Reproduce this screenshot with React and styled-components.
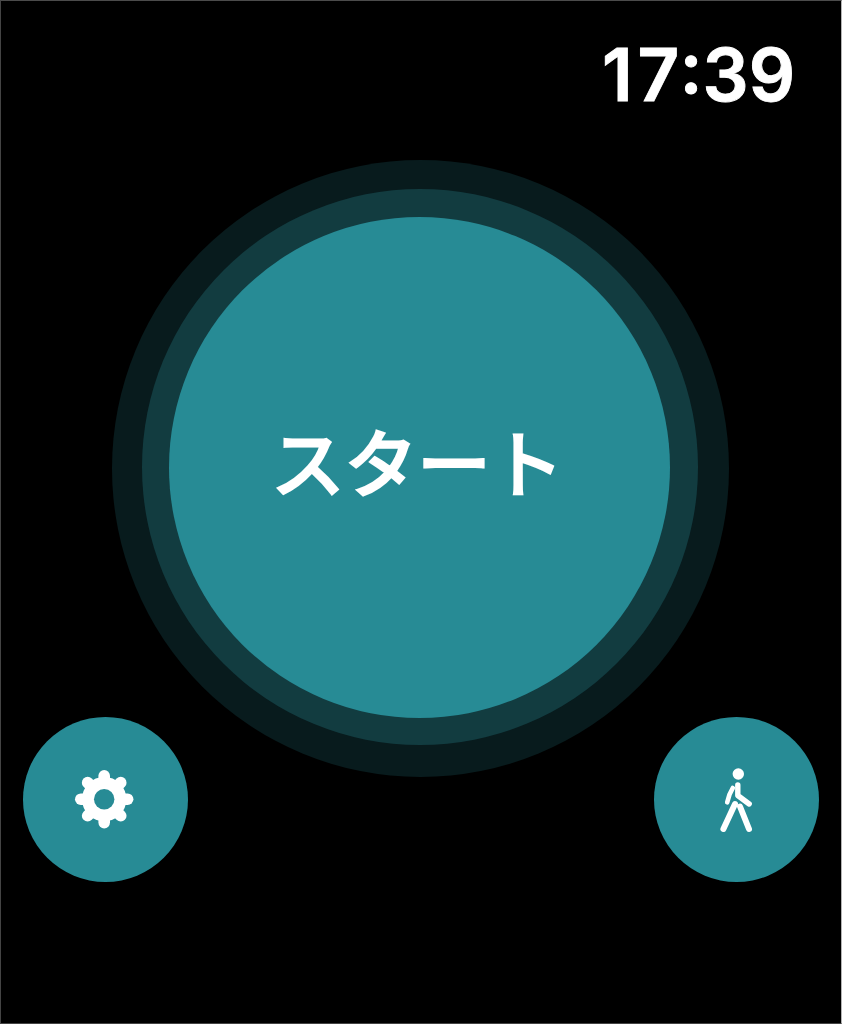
import React from 'react';
import styled, { createGlobalStyle } from 'styled-components';

const GlobalStyle = createGlobalStyle`
  *, *::before, *::after { box-sizing: border-box; }
  body { margin: 0; background: #000; overflow: hidden; }
`;

const Screen = styled.main`
  display: flex;
  flex-direction: column;
  width: 842px;
  height: 1024px;
  background: #000;
  border: 1px solid #444;
  border-top-color: #4b4b4b;
  border-right-color: #b4b4b4;
  color: #fff;
`;

const StatusBar = styled.header`
  display: flex;
  justify-content: flex-end;
  height: 159px;
  padding: 37px 46px 0 0;
`;

const Clock = styled.time`
  font: 600 72.5px/74px Inter, 'Liberation Sans', sans-serif;
  font-kerning: none;
  -webkit-text-stroke: 0.9px #fff;
`;

const LeadingDigit = styled.span`
  letter-spacing: 5px;
`;

const Disc = styled.div`
  display: flex;
  align-items: center;
  justify-content: center;
  flex: none;
  width: ${(p) => p.$size}px;
  height: ${(p) => p.$size}px;
  padding: ${(p) => p.$inset || 0};
  border-radius: 50%;
  background: ${(p) => p.$color};
`;

const StartArea = styled.section`
  display: flex;
  justify-content: center;
  height: 557px;
  padding-right: 1px;
`;

const StartButton = styled.button`
  flex: none;
  width: 501px;
  height: 501px;
  padding: 0 4px 15px 0;
  border: 0;
  border-radius: 50%;
  background: #278b95;
  color: #fff;
  font: 400 73px/1 'Noto Sans CJK JP', sans-serif;
  -webkit-text-stroke: 3.2px #fff;
  white-space: nowrap;
`;

const Actions = styled.nav`
  display: flex;
  justify-content: space-between;
  padding: 0 22.5px 0 21.5px;
`;

const RoundButton = styled.button`
  display: flex;
  align-items: center;
  justify-content: center;
  width: 165px;
  height: 165px;
  padding: 0;
  border: 0;
  border-radius: 50%;
  background: #278b95;
  color: #fff;
  z-index: 1;
`;

const Icon = styled.svg`
  display: block;
  width: ${(p) => p.$w}px;
  height: ${(p) => p.$h}px;
`;

const teeth = [0, 45, 90, 135];

function GearIcon() {
  return (
    <Icon $w={64} $h={64} viewBox="-31.2 -31.2 64 64" aria-hidden="true">
      <mask id="gear-hole" maskUnits="userSpaceOnUse" x="-34" y="-34" width="68" height="68">
        <rect x="-34" y="-34" width="68" height="68" fill="#fff" />
        <circle r="10.2" fill="#000" />
      </mask>
      <g mask="url(#gear-hole)" stroke="currentColor" strokeWidth="11.6" strokeLinecap="round">
        <circle r="15.6" fill="none" strokeWidth="13" />
        {teeth.map((a) => (
          <path key={a} d="M-23.4 0H23.4" transform={`rotate(${a})`} />
        ))}
      </g>
    </Icon>
  );
}

function WalkIcon() {
  return (
    <Icon $w={38} $h={66} viewBox="17 12 38 66" aria-hidden="true">
      <circle cx="38.3" cy="19" r="5.7" fill="currentColor" />
      <g fill="none" stroke="currentColor" strokeLinecap="round" strokeLinejoin="round">
        <path d="M37.8 30V40.5L49.2 49" strokeWidth="5.4" />
        <path d="M32.8 33L29.5 39.5L27.2 47.3" strokeWidth="4.6" />
        <path d="M35 49L23.4 74" strokeWidth="6" />
        <path d="M40 51.5L49 74" strokeWidth="6" />
      </g>
    </Icon>
  );
}

export default function App() {
  return (
    <>
      <GlobalStyle />
      <Screen>
        <StatusBar>
          <Clock><LeadingDigit>1</LeadingDigit>7:39</Clock>
        </StatusBar>
        <StartArea>
          <Disc $size={617} $color="#081b1d" $inset="0 1px 3px 0">
            <Disc $size={556} $color="#123c40" $inset="0 1px 0 0">
              <StartButton type="button">スタート</StartButton>
            </Disc>
          </Disc>
        </StartArea>
        <Actions>
          <RoundButton type="button" aria-label="設定">
            <GearIcon />
          </RoundButton>
          <RoundButton type="button" aria-label="ウォーキング">
            <WalkIcon />
          </RoundButton>
        </Actions>
      </Screen>
    </>
  );
}
